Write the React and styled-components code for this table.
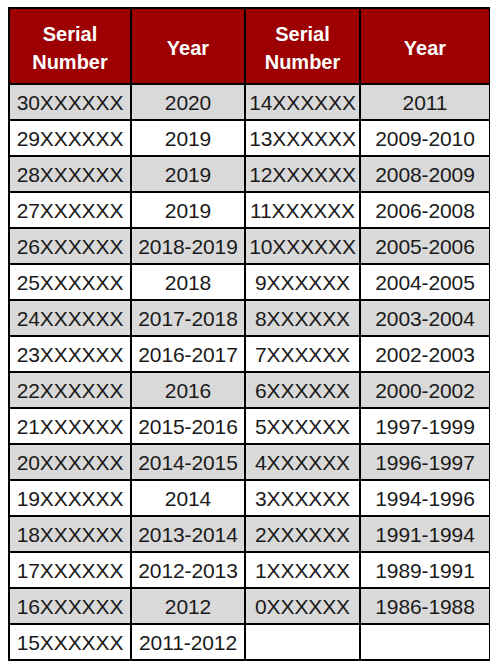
import styled, { createGlobalStyle } from 'styled-components';

const GlobalStyle = createGlobalStyle`
  body {
    margin: 7px 8px;
    background: #fff;
    font-family: 'Liberation Sans', Arial, sans-serif;
  }
`;

const left = [
  ['30XXXXXX', '2020'],
  ['29XXXXXX', '2019'],
  ['28XXXXXX', '2019'],
  ['27XXXXXX', '2019'],
  ['26XXXXXX', '2018-2019'],
  ['25XXXXXX', '2018'],
  ['24XXXXXX', '2017-2018'],
  ['23XXXXXX', '2016-2017'],
  ['22XXXXXX', '2016'],
  ['21XXXXXX', '2015-2016'],
  ['20XXXXXX', '2014-2015'],
  ['19XXXXXX', '2014'],
  ['18XXXXXX', '2013-2014'],
  ['17XXXXXX', '2012-2013'],
  ['16XXXXXX', '2012'],
  ['15XXXXXX', '2011-2012'],
];

const right = [
  ['14XXXXXX', '2011'],
  ['13XXXXXX', '2009-2010'],
  ['12XXXXXX', '2008-2009'],
  ['11XXXXXX', '2006-2008'],
  ['10XXXXXX', '2005-2006'],
  ['9XXXXXX', '2004-2005'],
  ['8XXXXXX', '2003-2004'],
  ['7XXXXXX', '2002-2003'],
  ['6XXXXXX', '2000-2002'],
  ['5XXXXXX', '1997-1999'],
  ['4XXXXXX', '1996-1997'],
  ['3XXXXXX', '1994-1996'],
  ['2XXXXXX', '1991-1994'],
  ['1XXXXXX', '1989-1991'],
  ['0XXXXXX', '1986-1988'],
  ['', ''],
];

function App() {
  return (
    <>
      <GlobalStyle />
      <Table>
        <Head>Serial<br />Number</Head>
        <Head>Year</Head>
        <Head>Serial<br />Number</Head>
        <Head>Year</Head>
        {left.map((row, i) => {
          const shaded = i % 2 === 0;
          return [
            <Cell key={`a${i}`} shaded={shaded}>{row[0]}</Cell>,
            <Cell key={`b${i}`} shaded={shaded}>{row[1]}</Cell>,
            <Cell key={`c${i}`} shaded={shaded}>{right[i][0]}</Cell>,
            <Cell key={`d${i}`} shaded={shaded}>{right[i][1]}</Cell>,
          ];
        })}
      </Table>
    </>
  );
}

const Table = styled.div`
  display: grid;
  grid-template-columns: 120px 112px 113px 128px;
  grid-template-rows: 74px;
  grid-auto-rows: 34px;
  gap: 2px;
  padding: 2px;
  width: max-content;
  background-color: #000;
`;

const Head = styled.div`
  display: flex;
  align-items: center;
  justify-content: center;
  padding-top: 3px;
  text-align: center;
  background-color: #9c0000;
  color: #fff;
  font-size: 20px;
  font-weight: 700;
  line-height: 28px;
`;

const Cell = styled.div`
  display: flex;
  align-items: center;
  justify-content: center;
  padding-top: 1px;
  white-space: nowrap;
  background-color: ${({ shaded }) => (shaded ? '#d9d9d9' : '#fff')};
  color: #1a1a1a;
  font-size: 21px;
  letter-spacing: -0.1px;
`;

export default App;
